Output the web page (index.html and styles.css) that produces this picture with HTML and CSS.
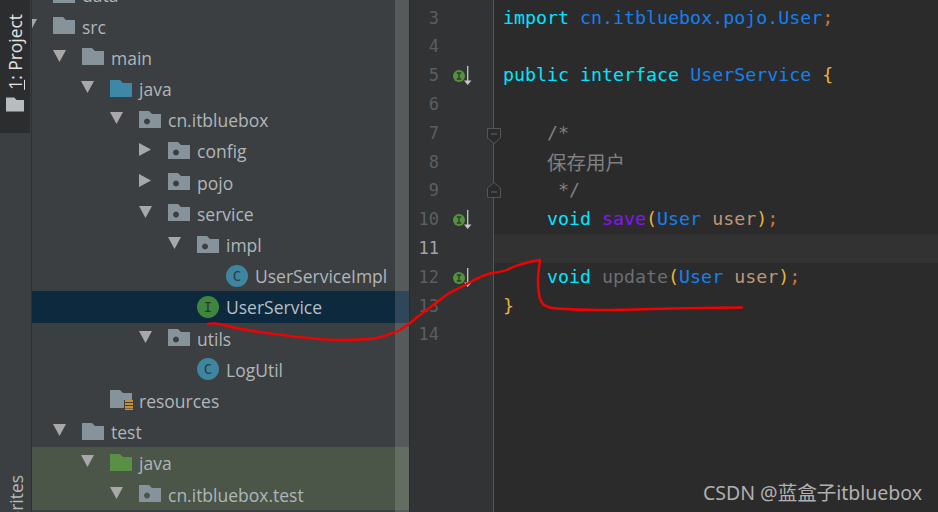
FILE: index.html
```html
<!DOCTYPE html>
<html>
<head>
<meta charset="utf-8">
<title>UserService</title>
<link rel="stylesheet" href="styles.css">
</head>
<body>
<svg width="0" height="0" class="defs">
  <symbol id="folder" viewBox="0 0 22 17"><path d="M0 0H10L13 3H22V17H0Z"/></symbol>
  <symbol id="pkg" viewBox="0 0 22 17"><path fill-rule="evenodd" d="M0 0H10L13 3H22V17H0ZM8 7.500a3 3 0 1 0 .01 0Z"/></symbol>
  <symbol id="arrow-d" viewBox="0 0 13 12"><path d="M0 0H13L6.500 12Z"/></symbol>
  <symbol id="arrow-r" viewBox="0 0 12 13"><path d="M0 0L12 6.500L0 13Z"/></symbol>
  <symbol id="impl" viewBox="0 0 24 19"><circle cx="11" cy="10" r="6" fill="#54923f"/><path d="M8.800 7H13.200M8.800 13H13.200M11 7V13" stroke="#2c3a24" stroke-width="1.300" fill="none"/><path d="M19.700 0V15" stroke="#c8c8c8" stroke-width="1.300"/><path d="M16 14.500H23.400L19.700 19Z" fill="#c8c8c8"/></symbol>
</svg>
<main class="app">
  <aside class="stripe">
    <div class="tab">
      <span class="vtext"><u>1</u>: Project</span>
      <svg class="tab-folder"><use href="#folder"/></svg>
    </div>
    <span class="vtext fav">Favorites</span>
  </aside>

  <section class="tree">
    <div class="row d0 ghost"><span class="slot"></span><svg class="ic"><use href="#folder"/></svg><span class="name">data</span></div>
    <div class="row d0"><svg class="slot-ic ad"><use href="#arrow-d"/></svg><svg class="ic"><use href="#folder"/></svg><span class="name">src</span></div>
    <div class="row d1"><svg class="slot-ic ad"><use href="#arrow-d"/></svg><svg class="ic"><use href="#folder"/></svg><span class="name">main</span></div>
    <div class="row d2"><svg class="slot-ic ad"><use href="#arrow-d"/></svg><svg class="ic blue"><use href="#folder"/></svg><span class="name">java</span></div>
    <div class="row d3"><svg class="slot-ic ad"><use href="#arrow-d"/></svg><svg class="ic"><use href="#pkg"/></svg><span class="name">cn.itbluebox</span></div>
    <div class="row d4"><svg class="slot-ic ar"><use href="#arrow-r"/></svg><svg class="ic"><use href="#pkg"/></svg><span class="name">config</span></div>
    <div class="row d4"><svg class="slot-ic ar"><use href="#arrow-r"/></svg><svg class="ic"><use href="#pkg"/></svg><span class="name">pojo</span></div>
    <div class="row d4"><svg class="slot-ic ad"><use href="#arrow-d"/></svg><svg class="ic"><use href="#pkg"/></svg><span class="name">service</span></div>
    <div class="row d5"><svg class="slot-ic ad"><use href="#arrow-d"/></svg><svg class="ic"><use href="#pkg"/></svg><span class="name">impl</span></div>
    <div class="row d6"><span class="slot"></span><span class="cls c">C</span><span class="name">UserServiceImpl</span></div>
    <div class="row d5 selected"><span class="slot"></span><span class="cls i">I</span><span class="name">UserService</span></div>
    <div class="row d4"><svg class="slot-ic ad"><use href="#arrow-d"/></svg><svg class="ic"><use href="#pkg"/></svg><span class="name">utils</span></div>
    <div class="row d5"><span class="slot"></span><span class="cls c">C</span><span class="name">LogUtil</span></div>
    <div class="row d2"><span class="slot"></span>
      <svg class="ic res" viewBox="0 0 24 20"><path d="M0 0H10L13 3H22V12H14V18H0Z" fill="#87939a"/><path d="M14 10H24V20H14Z" fill="#3c3f41"/><path d="M15 11H23M15 14H23M15 17H23M15 19.500H23" stroke="#c9912f" stroke-width="2"/></svg>
      <span class="name">resources</span></div>
    <div class="row d1"><svg class="slot-ic ad"><use href="#arrow-d"/></svg><svg class="ic"><use href="#folder"/></svg><span class="name">test</span></div>
    <div class="row d2 tested"><svg class="slot-ic ad"><use href="#arrow-d"/></svg><svg class="ic green"><use href="#folder"/></svg><span class="name">java</span></div>
    <div class="row d3 tested"><svg class="slot-ic ad"><use href="#arrow-d"/></svg><svg class="ic"><use href="#pkg"/></svg><span class="name">cn.itbluebox.test</span></div>
    <div class="scrollbar"></div>
  </section>

  <section class="editor">
    <div class="gutter">
      <div class="ln">3</div>
      <div class="ln">4</div>
      <div class="ln"><svg class="mark"><use href="#impl"/></svg>5</div>
      <div class="ln">6</div>
      <div class="ln">7
        <svg class="fold" viewBox="0 0 14 16"><path d="M.5.500H13.500V10L7 15.500L.5 10Z" fill="#2b2b2b" stroke="#555"/><path d="M4 6H10" stroke="#666"/></svg></div>
      <div class="ln">8</div>
      <div class="ln">9
        <svg class="fold fold-end" viewBox="0 0 14 16"><path d="M.5 15.500H13.500V6L7 .5L.5 6Z" fill="#2b2b2b" stroke="#555"/><path d="M4 10H10" stroke="#666"/></svg></div>
      <div class="ln"><svg class="mark"><use href="#impl"/></svg>10</div>
      <div class="ln now">11</div>
      <div class="ln"><svg class="mark"><use href="#impl"/></svg>12</div>
      <div class="ln">13</div>
      <div class="ln">14</div>
    </div>
    <div class="code">
      <div class="cl"><span class="kw">import</span> <span class="ty">cn.itbluebox.pojo.User</span><span class="semi">;</span></div>
      <div class="cl"></div>
      <div class="cl"><span class="kw">public interface</span> <span class="ty">UserService</span> <span class="br">{</span></div>
      <div class="cl"></div>
      <div class="cl ind cm">/*</div>
      <div class="cl ind cm"><span class="cjk">保存用户</span></div>
      <div class="cl ind cm">&nbsp;*/</div>
      <div class="cl ind"><span class="kw">void</span> <span class="used">save</span><span class="br">(</span><span class="ty">User</span> <span class="pa">user</span><span class="br">)</span><span class="semi">;</span></div>
      <div class="cl now"></div>
      <div class="cl ind"><span class="kw">void</span> <span class="unused">update</span><span class="br">(</span><span class="ty">User</span> <span class="pa">user</span><span class="br">)</span><span class="semi">;</span></div>
      <div class="cl"><span class="br">}</span></div>
      <div class="cl"></div>
    </div>
  </section>
</main>
<svg class="ink" viewBox="0 0 938 512"><path d="M208 324C213 323 218 323 224 325C238 329 250 331 267 333C290 336 312 339 333 340C350 340 366 340 377 338C388 335 394 333 400 330C408 325 414 320 420 315C428 309 436 303 445 296C450 292 458 289 465 285C474 280 482 275 492 273C498 272 502 272 507 270C512 267 516 266 522 264C528 262 533 261 540 260C539 268 538 274 538 280C538 288 538 295 541 301C543 306 548 308 556 308.500C570 309.500 582 310 600 310C625 310 650 309 672 308.500C695 308 720 307.500 742 307.500" fill="none" stroke="#f40000" stroke-width="2.400" stroke-linecap="round" stroke-linejoin="round"/></svg>
<div class="watermark">CSDN @蓝盒子itbluebox</div>
</body>
</html>
```
FILE: styles.css
```css
html, body {
  margin: 0;
  height: 100%;
  overflow: hidden;
  background: #2b2b2b;
}
.defs { position: absolute; }
.app {
  display: flex;
  width: 938px;
  height: 512px;
  overflow: hidden;
}

/* left tool stripe */
.stripe {
  width: 31px;
  flex: none;
  height: 512px;
  overflow: hidden;
  display: flex;
  flex-direction: column;
  align-items: stretch;
  background: #3c3f41;
  border-right: 1px solid #2d2f30;
}
.tab {
  height: 133px;
  width: 30px;
  background: #2c2d2e;
  display: flex;
  flex-direction: column;
  align-items: center;
  padding-top: 14px;
  box-sizing: border-box;
}
.vtext {
  writing-mode: vertical-rl;
  transform: rotate(180deg);
  font: 17.400px/20px "Open Sans", "Noto Sans", sans-serif;
  color: #e2e3e4;
  white-space: nowrap;
}
.tab-folder {
  width: 18px;
  height: 15px;
  margin-top: 7px;
  fill: #b9bcbe;
}
.fav {
  margin-top: auto;
  align-self: center;
  margin-bottom: -37px;
  color: #b4b8ba;
  flex: none;
}

/* project tree */
.tree {
  position: relative;
  width: 377px;
  flex: none;
  height: 512px;
  overflow: hidden;
  background: #3c3f41;
  font: 17.500px/31.200px "Open Sans", "Noto Sans", sans-serif;
  color: #afb6ba;
}
.row {
  height: 31.200px;
  display: flex;
  align-items: center;
  white-space: nowrap;
}
.name { padding-top: 2px; }
.ghost { margin-top: -20.500px; }
.ghost .name { padding-top: 0; }
.d0 { margin-left: -8px; }
.d1 { padding-left: 21px; }
.d2 { padding-left: 49px; }
.d3 { padding-left: 78px; }
.d4 { padding-left: 107px; }
.d5 { padding-left: 136px; }
.d6 { padding-left: 165px; }
.slot { width: 29px; flex: none; }
.slot-ic { flex: none; fill: #a8a8a8; }
.ad { width: 13px; height: 12px; margin: -3px 16px 0 0; }
.ar { width: 12px; height: 13px; margin: -3px 17px 0 0; }
.ic {
  width: 22px;
  height: 17px;
  flex: none;
  margin-right: 7px;
  margin-top: -1px;
  fill: #87939a;
}
.ic.blue { fill: #3d88a8; }
.ic.green { fill: #5a8f46; }
.ic.res { width: 24px; height: 20px; margin-right: 5px; }
.cls {
  width: 22px;
  height: 22px;
  border-radius: 50%;
  flex: none;
  margin-right: 7px;
  display: flex;
  align-items: center;
  justify-content: center;
  font: 14px/22px "DejaVu Sans Mono", monospace;
  color: #2b3a40;
}
.cls.c { background: #3e86a0; }
.cls.i { background: #3f8540; color: #2a3a26; }
.selected { background: #0d293e; color: #b4bfc6; }
.tested { background: #4b5548; }
.scrollbar {
  position: absolute;
  top: 0;
  right: 0;
  width: 14px;
  height: 100%;
  background: rgba(255, 255, 255, 0.14);
}

/* editor */
.editor {
  flex: 1;
  min-width: 0;
  display: flex;
  height: 512px;
  background: #2b2b2b;
  font: 18.300px/28.800px "DejaVu Sans Mono", monospace;
}
.gutter {
  width: 85px;
  flex: none;
  box-sizing: border-box;
  padding-top: 3.600px;
  background: #313335;
  border-right: 1px solid #555758;
  border-left: 1px solid #2b2b2b;
}
.ln {
  position: relative;
  height: 28.800px;
  width: 29px;
  text-align: right;
  color: #5b5f61;
  font-size: 17px;
}
.ln.now { color: #a4a3a3; }
.mark {
  position: absolute;
  left: 38px;
  top: 5px;
  width: 24px;
  height: 19px;
}
.fold {
  position: absolute;
  left: 77px;
  top: 9px;
  width: 14px;
  height: 16px;
}
.fold-end { top: 6px; }
.code {
  flex: 1;
  min-width: 0;
  padding-top: 3.600px;
  color: #a9b7c6;
}
.cl {
  height: 28.800px;
  padding-left: 9px;
  white-space: pre;
}
.cl.ind { padding-left: 53px; }
.cl.now { background: #323232; }
.kw { color: #00e5ff; }
.ty { color: #1480f0; }
.br { color: #e8b33c; }
.semi { color: #cc7832; }
.used { color: #8a0fff; }
.unused { color: #6d6e72; }
.pa { color: #bf9679; }
.cm { color: #808080; }
.cjk { font-family: "Noto Sans CJK SC", sans-serif; font-size: 19.500px; }

/* overlays */
.ink {
  position: absolute;
  left: 0;
  top: 0;
  width: 938px;
  height: 512px;
  pointer-events: none;
}
.watermark {
  position: absolute;
  right: 16px;
  bottom: 7px;
  font: 19.500px/24px "Noto Sans", "Noto Sans CJK SC", sans-serif;
  color: #b0b0b0;
  white-space: nowrap;
}
```
